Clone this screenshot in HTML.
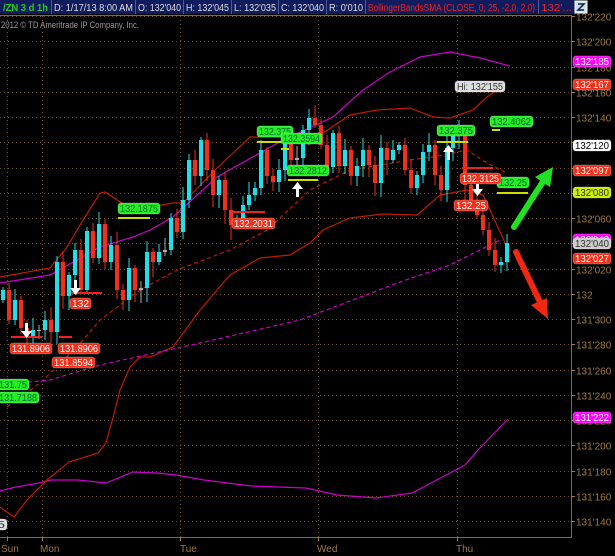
<!DOCTYPE html>
<html><head><meta charset="utf-8"><style>
html,body{margin:0;padding:0;background:#000;width:615px;height:556px;overflow:hidden}
svg{display:block;font-family:"Liberation Sans",sans-serif}
</style></head><body>
<svg id="s" width="615" height="556" viewBox="0 0 615 556" xmlns="http://www.w3.org/2000/svg">
<rect width="615" height="556" fill="#000"/>
<g id="grid"></g>
<line x1="0" y1="15.5" x2="571" y2="15.5" stroke="#8a6a2a" stroke-width="1"/>
<line x1="571.5" y1="15" x2="571.5" y2="537" stroke="#8a6a2a"/>
<line x1="0" y1="537.5" x2="572" y2="537.5" stroke="#8a6a2a"/>
<g id="axis" font-size="10" fill="#a07a40"></g>
<g font-size="10" fill="#a07a40">
<text x="1" y="552">Sun</text><text x="40" y="552">Mon</text><text x="180" y="552">Tue</text><text x="317" y="552">Wed</text><text x="456" y="552">Thu</text>
</g>
<text x="1" y="28" font-size="9" fill="#999" textLength="138" lengthAdjust="spacingAndGlyphs">2012 © TD Ameritrade IP Company, Inc.</text>
<polyline fill="none" stroke="#c0c" stroke-width="1.2" points="0,491 16,487 39,483 51,480 78,480 106,483 133,472 157,473 176,475 204,480 251,486 306,488 337,495 376,498 412,493 431,483 465,465 478,450 508,419"/>
<polyline fill="none" stroke="#c01a00" stroke-width="1.2" points="0,507 14,517 27,500 47,480 69,462 98,453 106,443 115,410 120,390 130,367 140,357 150,357 173,347 200,310 230,275 260,258 290,255 310,243 323,230 350,218 383,214 417,215 440,195 467,190 483,195 490,210 507,247"/>
<polyline fill="none" stroke="#c01a00" stroke-width="1.2" points="0,277 50,268 67,247 83,220 100,193 105,192 117,200 133,210 150,207 173,203 183,203 215,170 233,153 250,137 283,137 323,133 350,115 377,110 410,108 433,117 450,118 473,110 487,97 505,85"/>
<polyline fill="none" stroke="#c01a00" stroke-width="1.2" stroke-dasharray="4,3" points="7,407 40,383 77,347 100,320 140,290 177,270 230,250 267,230 310,190 350,170 410,160 433,157 467,150 487,163 505,172"/>
<polyline fill="none" stroke="#c0c" stroke-width="1.2" points="0,283 50,275 100,247 133,237 150,230 173,217 217,177 283,140 333,117 363,90 390,72 420,57 450,52 480,58 510,66"/>
<polyline fill="none" stroke="#c0c" stroke-width="1.2" stroke-dasharray="4,3" points="0,385 50,380 100,365 200,343 300,320 400,282 450,265 500,240"/>
<g id="candles"></g>
<g stroke-width="2">
<line x1="437" y1="142" x2="468" y2="142" stroke="#cd0"/>
<line x1="257" y1="142" x2="292" y2="142" stroke="#cd0"/>
<line x1="281" y1="149" x2="289" y2="149" stroke="#cd0"/>
<line x1="288" y1="180" x2="318" y2="180" stroke="#cd0"/>
<line x1="118" y1="218" x2="150" y2="218" stroke="#cd0"/>
<line x1="497" y1="193" x2="528" y2="193" stroke="#cd0"/>
<line x1="492" y1="130" x2="500" y2="130" stroke="#cd0"/>
<line x1="462" y1="168" x2="493" y2="168" stroke="#e22"/>
<line x1="233" y1="212" x2="265" y2="212" stroke="#e22"/>
<line x1="71" y1="293" x2="102" y2="293" stroke="#e22"/>
<line x1="11" y1="337" x2="42" y2="337" stroke="#e22"/>
<line x1="59" y1="337" x2="72" y2="337" stroke="#e22"/>
</g>
<g fill="#fff">
<path d="M74,280h3v8h4l-5.5,7-5.5-7h4z"/>
<path d="M25,323h3v8h4l-5.5,7-5.5-7h4z"/>
<path d="M476,181h3v8h4l-5.5,7-5.5-7h4z"/>
<path d="M296,197h3v-8h4l-5.5-7-5.5,7h4z"/>
<path d="M447,160h3v-8h4l-5.5-7-5.5,7h4z"/>
</g>
<line x1="514" y1="227" x2="544" y2="180" stroke="#22e022" stroke-width="6" stroke-linecap="round"/>
<path d="M553,167 L535,177 L550,187 Z" fill="#22e022"/>
<line x1="516" y1="252" x2="540" y2="302" stroke="#f02810" stroke-width="6" stroke-linecap="round"/>
<path d="M548,319 L531,305 L547,298 Z" fill="#f02810"/>
<g id="labels" font-size="10"></g>
<rect x="0" y="0" width="575" height="14" fill="#101c5e"/>
<g stroke="#4a5a9a"><line x1="51.5" y1="0" x2="51.5" y2="14"/><line x1="135.5" y1="0" x2="135.5" y2="14"/><line x1="183.5" y1="0" x2="183.5" y2="14"/><line x1="231.5" y1="0" x2="231.5" y2="14"/><line x1="278.5" y1="0" x2="278.5" y2="14"/><line x1="326.5" y1="0" x2="326.5" y2="14"/><line x1="365.5" y1="0" x2="365.5" y2="14"/><line x1="538.5" y1="0" x2="538.5" y2="14"/></g>
<g font-size="10" fill="#ddd" lengthAdjust="spacingAndGlyphs">
<text x="3" y="11" fill="#2c2" font-weight="bold" textLength="45" lengthAdjust="spacingAndGlyphs">/ZN 3 d 1h</text>
<text x="54" y="11" textLength="79" lengthAdjust="spacingAndGlyphs">D: 1/17/13 8:00 AM</text>
<text x="138" y="11" textLength="43" lengthAdjust="spacingAndGlyphs">O: 132'040</text>
<text x="186" y="11" textLength="43" lengthAdjust="spacingAndGlyphs">H: 132'045</text>
<text x="234" y="11" textLength="42" lengthAdjust="spacingAndGlyphs">L: 132'035</text>
<text x="281" y="11" textLength="43" lengthAdjust="spacingAndGlyphs">C: 132'040</text>
<text x="329" y="11" textLength="34" lengthAdjust="spacingAndGlyphs">R: 0'010</text>
<text x="368" y="11" fill="#e22" textLength="167" lengthAdjust="spacingAndGlyphs">BollingerBandsSMA (CLOSE, 0, 25, -2.0, 2.0)</text>
<text x="541" y="11" fill="#e22" textLength="31" lengthAdjust="spacingAndGlyphs">132'...</text>
</g>
<rect x="575" y="1" width="12" height="12" fill="#cde" stroke="#fff"/>
<path d="M578,4h6l-6,6h6" stroke="#123" fill="none" stroke-width="1.5"/>
</svg>
<script>
(function(){
var NS="http://www.w3.org/2000/svg";
function el(p,t,a,txt){var e=document.createElementNS(NS,t);for(var k in a)e.setAttribute(k,a[k]);if(txt!=null)e.textContent=txt;p.appendChild(e);return e;}
var g=document.getElementById('grid');
var ticks=["132'220","132'200","132'180","132'160","132'140","132'120","132'100","132'080","132'060","132'040","132'020","132","131'300","131'280","131'260","131'240","131'220","131'200","131'180","131'160","131'140"];
var ax=document.getElementById('axis');
for(var i=0;i<ticks.length;i++){var y=Math.round(16+25.25*i)+0.5;
 el(g,'line',{x1:0,y1:y,x2:571,y2:y,stroke:'#6a4a1a','stroke-dasharray':'1,3'});
 el(ax,'line',{x1:571,y1:y,x2:575,y2:y,stroke:'#a07a40'});
 el(ax,'text',{x:576,y:y+4},ticks[i]);}
[7,42,180,318,457].forEach(function(x){el(g,'line',{x1:x+.5,y1:16,x2:x+.5,y2:537,stroke:'#6a4a1a','stroke-dasharray':'1,3'});el(ax,'line',{x1:x+.5,y1:537,x2:x+.5,y2:541,stroke:'#a07a40'});});
var closes=[290,320,300,328,336,330,330,320,332,262,296,275,250,290,231,258,224,262,245,290,300,268,290,288,252,262,252,250,218,232,200,160,176,140,170,195,180,210,225,220,205,195,188,150,176,182,170,140,160,158,130,118,125,145,167,133,166,150,176,166,150,165,183,148,160,150,145,170,188,175,152,145,175,190,148,135,130,185,205,215,230,250,265,262,243];
var c=document.getElementById('candles');var prev=300;
for(var i=0;i<closes.length;i++){var x=3+6*i,o=prev,cl=closes[i];prev=cl;
 var tp=Math.min(o,cl),bt=Math.max(o,cl);var h=(i*37)%11+3,l=(i*53)%13+3;
 var col=cl<o?'#1de0e8':'#f0301a'; if(Math.abs(o-cl)<3)col='#aaa';
 el(c,'line',{x1:x,y1:tp-h,x2:x,y2:bt+l,stroke:col,'stroke-width':1});
 el(c,'rect',{x:x-2,y:tp,width:4,height:Math.max(1,bt-tp),fill:col});}
var L=document.getElementById('labels');
function lab(x,y,w,txt,bg,fg,tx){el(L,'rect',{x:x,y:y,width:w,height:11,rx:3,fill:bg,stroke:'rgba(255,255,255,0.25)'});el(L,'text',{x:(tx||x+2),y:y+9,fill:fg,textLength:w-4,lengthAdjust:'spacingAndGlyphs'},txt);}
var R='#f0301a',G='#22ee22';
lab(455,81,50,"Hi: 132'155",'#ddd','#333');
lab(490,116,43,"132.4062",G,'#063');
lab(437,125,38,"132.375",G,'#063');
lab(257,126,36,"132.375",G,'#063');
lab(281,133,41,"132.3594",G,'#063');
lab(287,165,42,"132.2812",G,'#063');
lab(118,203,42,"132.1875",G,'#063');
lab(497,177,32,"132.25",G,'#063');
lab(460,173,41,"132.3125",R,'#fff');
lab(454,200,34,"132.25",R,'#fff');
lab(232,218,43,"132.2031",R,'#fff');
lab(70,298,21,"132",R,'#fff');
lab(10,343,42,"131.8906",R,'#fff');
lab(58,343,42,"131.8906",R,'#fff');
lab(52,357,43,"131.8594",R,'#fff');
lab(-3,379,32,"131.75",G,'#063');
lab(-3,392,42,"131.7188",G,'#063');
lab(-5,519,12,"5",'#ddd','#333');
lab(573,56,38,"132'185",'#f0f','#fff',575);
lab(573,79,38,"132'167",R,'#fff',575);
lab(573,140,38,"132'120",'#fff','#000',575);
lab(573,165,38,"132'097",R,'#fff',575);
lab(573,187,38,"132'080",'#ccee00','#333',575);
lab(573,234,38,"132'042",'#f0f','#fff',575);
lab(573,238,38,"132'040",'#ccc','#333',575);
lab(573,253,38,"132'027",R,'#fff',575);
lab(573,412,38,"131'222",'#f0f','#fff',575);
})();
</script>
</body></html>
